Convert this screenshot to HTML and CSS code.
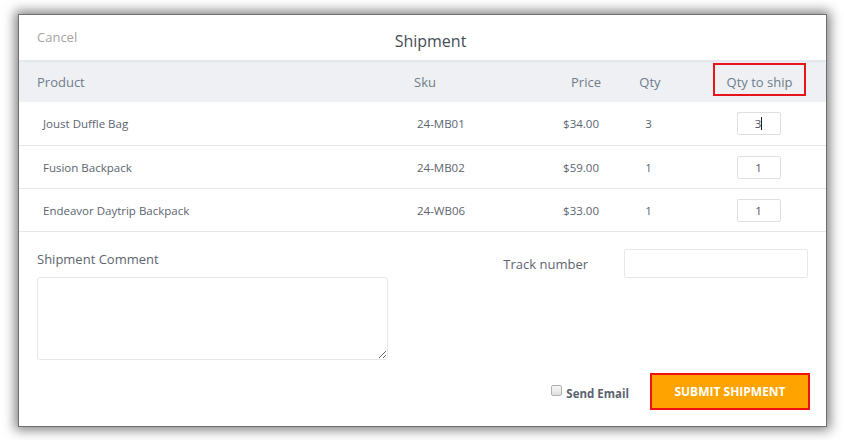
FILE: index.html
```html
<!DOCTYPE html>
<html lang="en">
<head>
<meta charset="utf-8">
<title>Shipment</title>
<link rel="stylesheet" href="styles.css">
</head>
<body>
<div class="page">
  <div class="modal">
    <div class="modal-header">
      <div class="cancel">Cancel</div>
      <div class="title">Shipment</div>
      <div></div>
    </div>
    <div class="thead">
      <div class="c-product">Product</div>
      <div class="c-sku">Sku</div>
      <div class="c-price">Price</div>
      <div class="c-qty">Qty</div>
      <div class="c-ship"><span class="highlight">Qty to ship</span></div>
    </div>
    <div class="row">
      <div class="c-product">Joust Duffle Bag</div>
      <div class="c-sku">24-MB01</div>
      <div class="c-price">$34.00</div>
      <div class="c-qty">3</div>
      <div class="c-ship"><div class="qty-input">3<span class="caret"></span></div></div>
    </div>
    <div class="row">
      <div class="c-product">Fusion Backpack</div>
      <div class="c-sku">24-MB02</div>
      <div class="c-price">$59.00</div>
      <div class="c-qty">1</div>
      <div class="c-ship"><div class="qty-input">1</div></div>
    </div>
    <div class="row">
      <div class="c-product">Endeavor Daytrip Backpack</div>
      <div class="c-sku">24-WB06</div>
      <div class="c-price">$33.00</div>
      <div class="c-qty">1</div>
      <div class="c-ship"><div class="qty-input">1</div></div>
    </div>
    <div class="details">
      <div class="comment">
        <div class="label">Shipment Comment</div>
        <textarea class="comment-box"></textarea>
      </div>
      <div class="track">
        <div class="label">Track number</div>
        <div class="track-input"></div>
      </div>
    </div>
    <div class="footer">
      <label class="send-email"><span class="checkbox"></span>Send Email</label>
      <button class="submit">SUBMIT SHIPMENT</button>
    </div>
  </div>
</div>
</body>
</html>
```
FILE: styles.css
```css
* { box-sizing: border-box; }
html, body { margin: 0; background: #ffffff; }
body { font-family: "Open Sans", "Liberation Sans", sans-serif; }

.page {
  padding: 15px 18px 14px 19px;
}

.modal {
  background: #ffffff;
  box-shadow: 0 0 0 1px #6e6e6e, 0 0 11px 4px rgba(0, 0, 0, 0.5);
}

.modal-header {
  height: 45px;
  display: grid;
  grid-template-columns: 1fr auto 1fr;
  align-items: start;
}
.cancel {
  padding: 13px 0 0 18px;
  font-size: 13px;
  line-height: 18px;
  color: #a4a4a4;
}
.title {
  padding: 15px 0 0 16px;
  font-size: 16px;
  line-height: 22px;
  color: #464c55;
}

.thead, .row {
  display: grid;
  grid-template-columns: 376px 135px 80px 80px 136px;
}
.thead {
  height: 42px;
  border-top: 2px solid #e4e7eb;
  background: #eef0f4;
  font-size: 13px;
  line-height: 20px;
  color: #6f7c8a;
  align-items: start;
}
.thead > div { padding-top: 10px; }
.thead .c-product { padding-left: 18px; }
.thead .c-sku { padding-left: 19px; }
.thead .c-price { text-align: right; padding-right: 9px; }
.thead .c-qty { text-align: center; }
.thead .c-ship { text-align: center; padding-top: 1px; padding-left: 3px; }
.highlight {
  display: inline-block;
  border: 2px solid #e8141b;
  padding: 7px 12px 2px;
}

.row {
  height: 43px;
  border-bottom: 1px solid #e5e7ea;
  align-items: center;
  font-size: 11.5px;
  color: #5b6570;
}
.thead + .row { height: 44px; }
.row .c-product { padding-left: 24px; }
.row .c-sku { padding-left: 22px; }
.row .c-price { text-align: right; padding-right: 11px; }
.row .c-qty { text-align: center; padding-right: 3px; }
.row .c-ship { display: flex; justify-content: center; padding-left: 1px; }
.qty-input {
  width: 44px;
  height: 23px;
  border: 1px solid #dcdfe4;
  border-radius: 2px;
  font-size: 11.5px;
  line-height: 21px;
  text-align: center;
  color: #4d5660;
}
.caret {
  display: inline-block;
  width: 1px;
  height: 13px;
  background: #222;
  vertical-align: -2px;
}

.details {
  display: flex;
  padding: 17px 18px 0 18px;
}
.label {
  font-size: 13px;
  line-height: 20px;
  color: #5d6570;
}
.comment { width: 351px; }
.comment-box {
  display: block;
  margin-top: 8px;
  width: 351px;
  height: 83px;
  border: 1px solid #e6e8ee;
  border-radius: 3px;
  background: #fff;
  resize: vertical;
  outline: none;
}
.track {
  margin-left: auto;
  display: flex;
  align-items: center;
  margin-top: 0;
  height: 29px;
  gap: 36px;
}
.track-input {
  width: 184px;
  height: 29px;
  border: 1px solid #e6e8ee;
  border-radius: 2px;
}

.footer {
  display: flex;
  justify-content: flex-end;
  align-items: center;
  padding: 13px 16px 16px 18px;
}
.send-email {
  display: flex;
  align-items: center;
  font-size: 11.5px;
  font-weight: 700;
  color: #5a636e;
  margin-right: 21px;
  margin-top: 4px;
}
.checkbox {
  width: 11px;
  height: 11px;
  border: 1px solid #b0b0b0;
  border-radius: 2px;
  background: linear-gradient(#f7f7f7, #e0e0e0);
  margin-right: 4px;
  margin-top: -6px;
}
.submit {
  width: 160px;
  height: 37px;
  border: 2px solid #f20f12;
  background: #ffa300;
  color: #ffffff;
  font-family: "Open Sans", "Liberation Sans", sans-serif;
  font-size: 12px;
  font-weight: 700;
  padding: 0;
}
```
